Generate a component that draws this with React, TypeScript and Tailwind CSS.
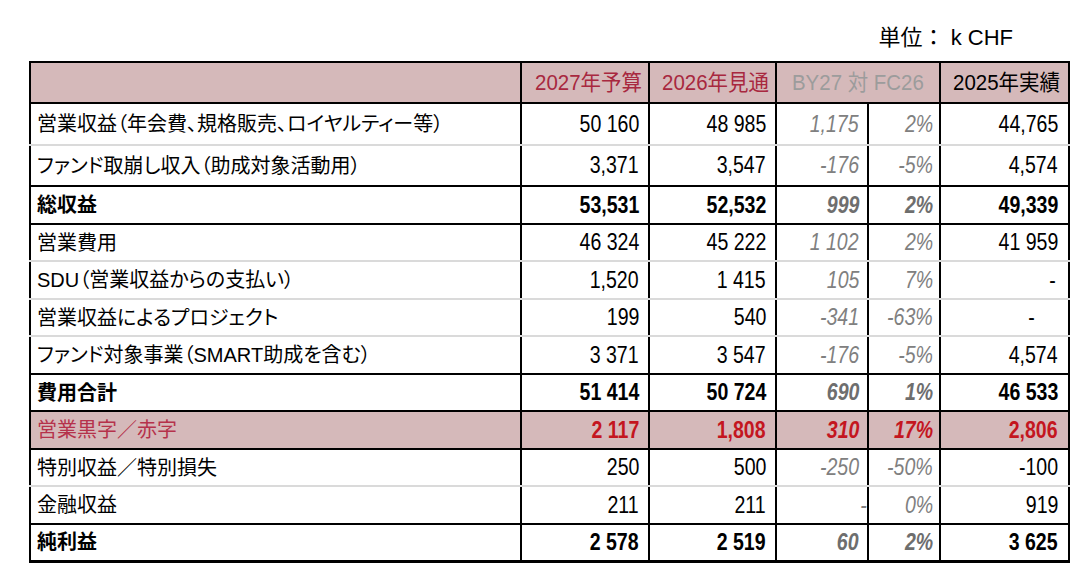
import React from 'react';

type Cell = string | { t: string; pad: string };
type Kind = 'normal' | 'total' | 'red';

interface Row {
  label: string;
  vals: Cell[];
  kind: Kind;
  h: string;
  line: 'gray' | 'black' | 'end';
}

const rows: Row[] = [
  { label: '営業収益（年会費、規格販売、ロイヤルティー等）', vals: ['50 160', '48 985', '1,175', '2%', '44,765'], kind: 'normal', h: 'h-[42px]', line: 'gray' },
  { label: 'ファンド取崩し収入（助成対象活動用）', vals: ['3,371', '3,547', '-176', '-5%', '4,574'], kind: 'normal', h: 'h-[41px]', line: 'black' },
  { label: '総収益', vals: ['53,531', '52,532', '999', '2%', '49,339'], kind: 'total', h: 'h-[38px]', line: 'black' },
  { label: '営業費用', vals: ['46 324', '45 222', '1 102', '2%', '41 959'], kind: 'normal', h: 'h-[37px]', line: 'gray' },
  { label: 'SDU（営業収益からの支払い）', vals: ['1,520', '1 415', '105', '7%', { t: '-', pad: 'pr-[12px]' }], kind: 'normal', h: 'h-[38px]', line: 'gray' },
  { label: '営業収益によるプロジェクト', vals: ['199', '540', '-341', '-63%', { t: '-', pad: 'pr-[33px]' }], kind: 'normal', h: 'h-[37px]', line: 'gray' },
  { label: 'ファンド対象事業（SMART助成を含む）', vals: ['3 371', '3 547', '-176', '-5%', '4,574'], kind: 'normal', h: 'h-[38px]', line: 'black' },
  { label: '費用合計', vals: ['51 414', '50 724', '690', '1%', '46 533'], kind: 'total', h: 'h-[37px]', line: 'black' },
  { label: '営業黒字／赤字', vals: ['2 117', '1,808', '310', '17%', '2,806'], kind: 'red', h: 'h-[38px]', line: 'black' },
  { label: '特別収益／特別損失', vals: ['250', '500', '-250', '-50%', '-100'], kind: 'normal', h: 'h-[37px]', line: 'gray' },
  { label: '金融収益', vals: ['211', '211', { t: '-', pad: 'pr-0' }, '0%', '919'], kind: 'normal', h: 'h-[38px]', line: 'black' },
  { label: '純利益', vals: ['2 578', '2 519', '60', '2%', '3 625'], kind: 'total', h: 'h-[37px]', line: 'end' },
];

const pads = ['pr-[9px]', 'pr-[9px]', 'pr-[8px]', 'pr-[6px]', 'pr-[10px]'];

const lineCls = {
  gray: 'border-b-2 border-b-[#dadada]',
  black: 'border-b-2 border-b-black',
  end: 'border-b-[3px] border-b-black',
};

function valueCls(kind: Kind, i: number) {
  const soft = i === 2 || i === 3;
  if (kind === 'red') return soft ? 'font-bold italic text-[#c4161f]' : 'font-bold text-[#c4161f]';
  if (kind === 'total') return soft ? 'font-bold italic text-[#6e6e6e]' : 'font-bold text-black';
  return soft ? 'italic text-[#808080]' : 'text-black';
}

export default function App() {
  return (
    <div className="min-h-[587px] bg-white pt-[25px] pl-[29px] font-['Liberation_Sans','Noto_Sans_CJK_JP',sans-serif]">
      <div className="flex w-[1039px] justify-end pr-[55px] text-[22px] leading-[26px] text-black">
        単位： k CHF
      </div>
      <table className="mt-[10px] w-[1039px] table-fixed border-collapse border-2 border-black">
        <colgroup>
          <col className="w-[491px]" />
          <col className="w-[128px]" />
          <col className="w-[127px]" />
          <col className="w-[92px]" />
          <col className="w-[72px]" />
          <col className="w-[129px]" />
        </colgroup>
        <thead>
          <tr className="h-[41px] bg-[#d5b9ba] text-[22px]">
            <th className="border-2 border-black" />
            <th className="border-2 border-black pr-[6px] text-right font-normal text-[#a8283f]">
              <span className="inline-block origin-right scale-x-[0.93]">2027年予算</span>
            </th>
            <th className="border-2 border-black pr-[6px] text-right font-normal text-[#a8283f]">
              <span className="inline-block origin-right scale-x-[0.93]">2026年見通</span>
            </th>
            <th colSpan={2} className="border-2 border-black text-center font-normal text-[#9c9c9c]">
              <span className="inline-block origin-center scale-x-[0.93]">BY27 対 FC26</span>
            </th>
            <th className="border-2 border-black pr-[8px] text-right font-normal text-black">
              <span className="inline-block origin-right scale-x-[0.93]">2025年実績</span>
            </th>
          </tr>
        </thead>
        <tbody>
          {rows.map((r) => (
            <tr key={r.label} className={`${r.h} ${r.kind === 'red' ? 'bg-[#d5b9ba]' : 'bg-white'}`}>
              <td
                className={`border-x-2 border-x-black pl-[6px] text-[20px] [font-feature-settings:'palt'] ${lineCls[r.line]} ${
                  r.kind === 'total' ? 'font-bold text-black' : r.kind === 'red' ? 'text-[#b5324b]' : 'text-black'
                }`}
              >
                {r.label}
              </td>
              {r.vals.map((v, i) => {
                const text = typeof v === 'string' ? v : v.t;
                const pad = typeof v === 'string' ? pads[i] : v.pad;
                return (
                  <td
                    key={i}
                    className={`border-x-2 border-x-black text-right text-[23px] whitespace-nowrap ${pad} ${lineCls[r.line]} ${valueCls(r.kind, i)}`}
                  >
                    <span className="inline-block origin-right scale-x-[0.85]">{text}</span>
                  </td>
                );
              })}
            </tr>
          ))}
        </tbody>
      </table>
    </div>
  );
}
